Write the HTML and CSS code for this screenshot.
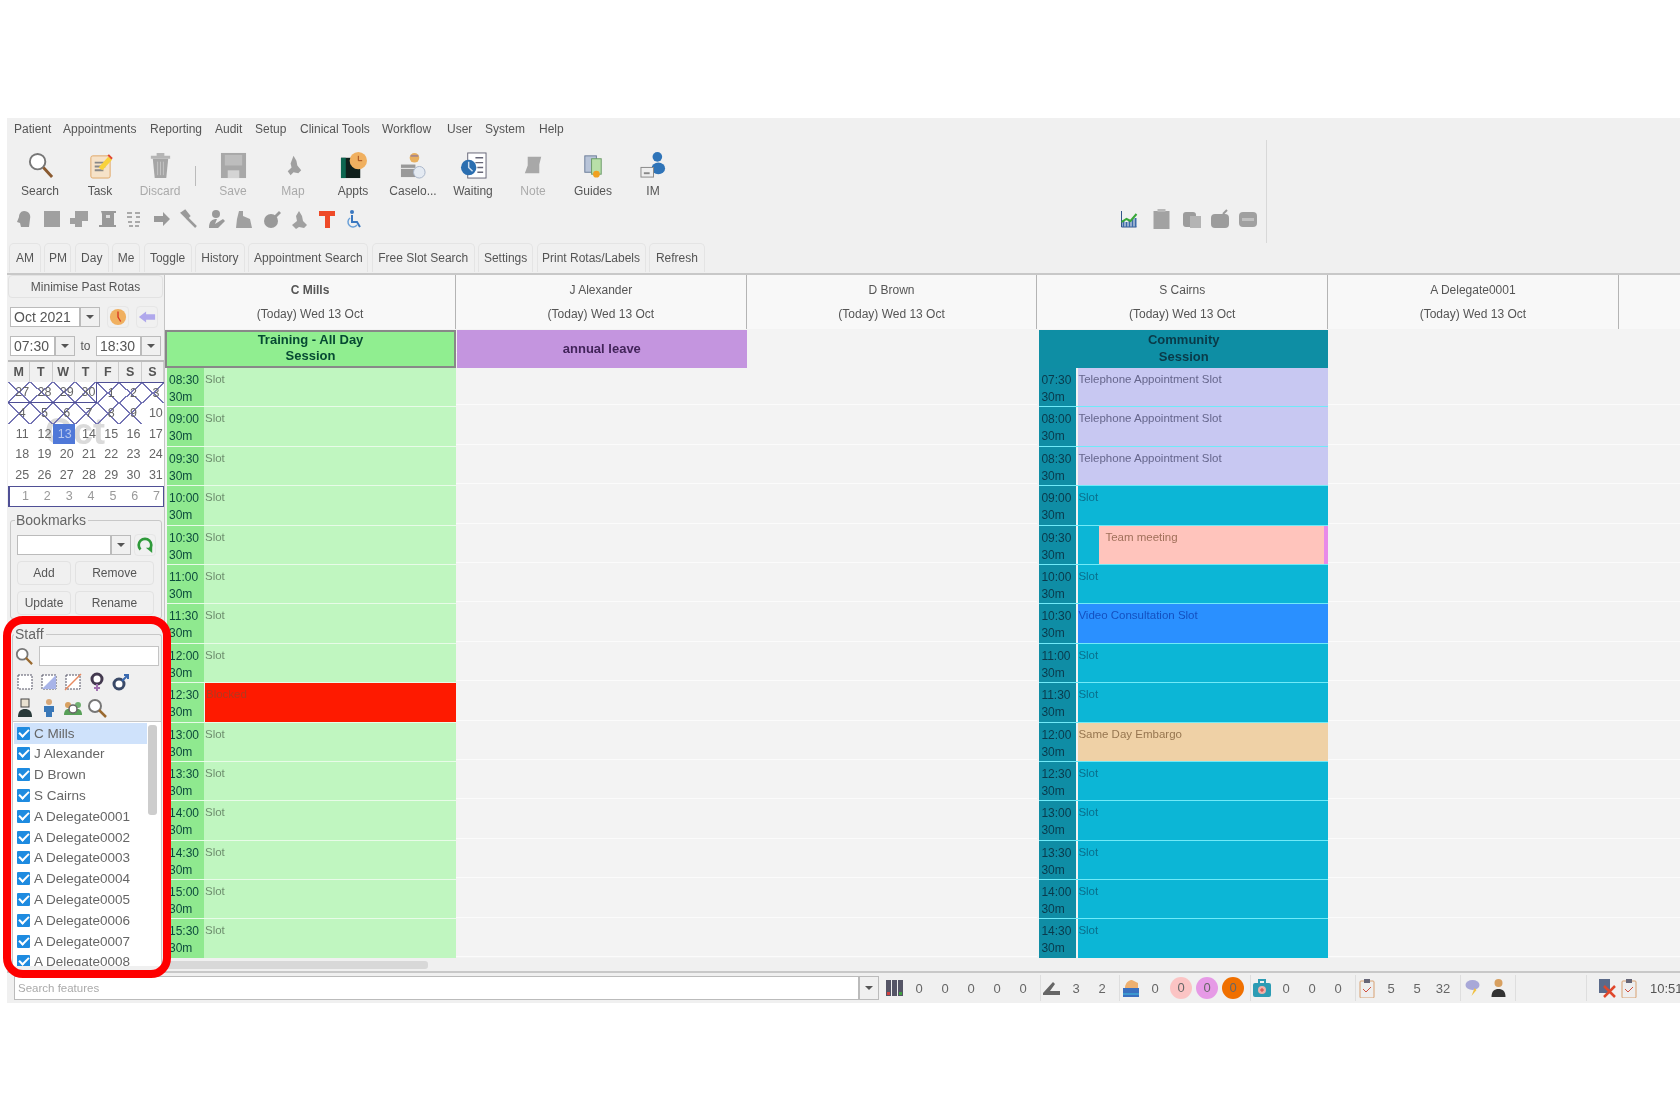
FILE: index.html
```html
<!DOCTYPE html>
<html lang="en">
<head>
  <meta charset="UTF-8" />
  <title>Rota view</title>
  <link rel="stylesheet" href="styles.css">
</head>
<body>

<div class="app">

  <!-- Menu -->
  <div class="menu">
    <span style="width:49px">Patient</span><span style="width:87px">Appointments</span><span style="width:65px">Reporting</span><span style="width:40px">Audit</span><span style="width:45px">Setup</span><span style="width:82px">Clinical Tools</span><span style="width:65px">Workflow</span><span style="width:38px">User</span><span style="width:54px">System</span><span>Help</span>
  </div>

  <!-- Toolbars -->
  <div class="tools">
    <div class="big">
      <div class="tool"><svg viewBox="0 0 28 28"><circle cx="11" cy="10" r="8" fill="#fff" stroke="#777" stroke-width="2"/><path d="M17 16l9 10" stroke="#8a5a30" stroke-width="3"/></svg><span>Search</span></div>
      <div class="tool"><svg viewBox="0 0 28 28"><rect x="4" y="4" width="20" height="23" rx="2" fill="#f6e2c8" stroke="#e0a868"/><path d="M8 11h11M8 15h11M8 19h9" stroke="#888" stroke-width="2"/><path d="M12 16l10-11 4 3-10 11z" fill="#f8d23c"/><path d="M22 3l4 4" stroke="#e04830" stroke-width="2"/></svg><span>Task</span></div>
      <div class="tool off"><svg viewBox="0 0 28 28"><path d="M6 7h16l-2 20H8z" fill="#a5a5a5"/><path d="M4 4h20v3H4zM10 1h8v3h-8z" fill="#b5b5b5"/><path d="M11 10v14M14 10v14M17 10v14" stroke="#c4c4c4"/></svg><span>Discard</span></div>
      <div class="sep"></div>
      <div class="tool off"><svg viewBox="0 0 28 28"><path d="M1 1h26v26H1z" fill="#a8a8a8"/><path d="M5 3h18v11H5z" fill="#bdbdbd"/><path d="M8 19h12v8H8z" fill="#d4d4d4"/></svg><span>Save</span></div>
      <div class="tool off"><svg viewBox="0 0 28 28"><path d="M14 4l3 5 1 5 4 5-3 3-5-1-3 3-3-4 4-4-1-4z" fill="#a0a0a0"/></svg><span>Map</span></div>
      <div class="tool"><svg viewBox="0 0 28 28"><path d="M1 6h20v21H1z" fill="#10201c"/><path d="M1 6h5v21H1z" fill="#0d6650"/><circle cx="19" cy="9" r="9" fill="#f0b060"/><path d="M19 4v5h4" stroke="#a04818" fill="none"/></svg><span>Appts</span></div>
      <div class="tool"><svg viewBox="0 0 28 28"><rect x="1" y="13" width="15" height="13" fill="#999"/><path d="M1 17h15" stroke="#eee"/><circle cx="20" cy="21" r="6" fill="#e4eaf2" stroke="#a8b4c8"/><circle cx="15" cy="6" r="5" fill="#e8b060"/><path d="M11 4h8" stroke="#a88" stroke-width="2"/></svg><span>Caselo...</span></div>
      <div class="tool"><svg viewBox="0 0 28 28"><rect x="8" y="1" width="19" height="26" fill="#fff" stroke="#667"/><path d="M16 6h8M16 11h8M18 16h6M18 21h6" stroke="#667" stroke-width="1.5"/><circle cx="9" cy="16" r="8" fill="#2a6eb0"/><path d="M9 10v6l4 4" stroke="#cde" fill="none" stroke-width="1.5"/></svg><span>Waiting</span></div>
      <div class="tool off"><svg viewBox="0 0 28 28"><path d="M8 5h14l-2 8v9H5l3-8z" fill="#a8a8a8"/></svg><span>Note</span></div>
      <div class="tool"><svg viewBox="0 0 28 28"><rect x="5" y="4" width="12" height="17" fill="#b8c4d8" stroke="#6a7c98"/><rect x="12" y="7" width="10" height="16" fill="#b8e0a8" stroke="#6a9a68"/><circle cx="17" cy="23" r="3.5" fill="#f0a020"/></svg><span>Guides</span></div>
      <div class="tool"><svg viewBox="0 0 28 28"><circle cx="18" cy="5" r="5" fill="#2f74b8"/><ellipse cx="19" cy="17" rx="7" ry="6" fill="#2f74b8"/><rect x="1" y="16" width="13" height="10" fill="#eee" stroke="#888"/><path d="M4 22h6" stroke="#888" stroke-width="2"/></svg><span>IM</span></div>
    </div>
    <div class="small">
      <svg viewBox="0 0 20 20"><path d="M10 2c5 0 7 4 6 8l-1 8H7l-1-4-3-1 2-5c0-3 2-6 5-6z" fill="#9a9a9a"/></svg>
      <svg viewBox="0 0 20 20"><path d="M2 2h16v16H2z" fill="#a0a0a0"/></svg>
      <svg viewBox="0 0 20 20"><path d="M6 2h13v10h-6v6H6v-3H1V9h5z" fill="#a0a0a0"/></svg>
      <svg viewBox="0 0 20 20"><path d="M4 2h15v2h-2v12h2v2H2v-2h3V5z" fill="#999"/><path d="M9 6h4v3H9z" fill="#ddd"/></svg>
      <svg viewBox="0 0 20 20"><path d="M3 4h5M11 4h5M3 8h5M12 8h4M4 13h4M11 13h5M5 17h4M11 17h4" stroke="#aaa" stroke-width="2"/></svg>
      <svg viewBox="0 0 20 20"><path d="M2 7h9V3l7 7-7 7v-4H2z" fill="#999"/></svg>
      <svg viewBox="0 0 20 20"><path d="M3 4l3-2 4 5-2 2zM8 9l9 9" stroke="#9a9a9a" stroke-width="2.5" fill="#9a9a9a"/></svg>
      <svg viewBox="0 0 20 20"><circle cx="9" cy="5" r="4" fill="#999"/><path d="M2 19c0-7 3-9 8-9l-2 5 8-5 2 2-7 7z" fill="#999"/></svg>
      <svg viewBox="0 0 20 20"><path d="M5 2h4v5l7 3 2 9H2l1-9z" fill="#a0a0a0"/></svg>
      <svg viewBox="0 0 20 20"><circle cx="9" cy="12" r="7" fill="#999"/><path d="M12 7l5-5 2 2-5 5z" fill="#999"/></svg>
      <svg viewBox="0 0 20 20"><path d="M10 2l3 5 1 5 4 4-3 3-5-1-3 2-4-4 5-4-1-5z" fill="#a0a0a0"/></svg>
      <svg viewBox="0 0 20 20"><path d="M2 2h16v5h-5v12H8V7H2z" fill="#ee4a28"/></svg>
      <svg viewBox="0 0 20 20"><circle cx="8" cy="3" r="2" fill="#3a78c0"/><path d="M8 6v7h5l3 5" stroke="#3a78c0" stroke-width="2" fill="none"/><path d="M6 9a5 5 0 1 0 7 7" stroke="#6aa0d8" stroke-width="1.5" fill="none"/></svg>
      <div class="small-right">
        <svg class="w33" viewBox="0 0 20 20"><path d="M3 2v16h15" stroke="#33558a" fill="none"/><path d="M5 18v-7M8 18v-5M11 18v-6M14 18v-8M17 18v-9" stroke="#3b6aa8" stroke-width="2"/><path d="M3 13l5-3 4 2 6-7" stroke="#38a838" stroke-width="2" fill="none"/></svg>
        <svg class="w33" viewBox="0 0 20 20"><path d="M2 2h16v18H2z" fill="#a2a2a2"/><path d="M6 0h8v3H6z" fill="#b8b8b8"/></svg>
        <svg viewBox="0 0 20 20"><rect x="1" y="3" width="13" height="15" rx="3" fill="#9c9c9c"/><rect x="8" y="7" width="11" height="12" fill="#b4b4b4"/></svg>
        <svg viewBox="0 0 20 20"><rect x="1" y="5" width="18" height="14" rx="4" fill="#9c9c9c"/><path d="M13 5l4-4" stroke="#999" stroke-width="2"/></svg>
        <svg viewBox="0 0 20 20"><rect x="1" y="3" width="18" height="15" rx="4" fill="#a0a0a0"/><path d="M4 9h12v3H4z" fill="#c0c0c0"/></svg>
      </div>
    </div>
  </div>

  <!-- Tabs -->
  <div class="tabs">
    <button style="width:32px">AM</button><button style="width:27px">PM</button><button style="width:34px">Day</button><button style="width:28px">Me</button><button style="width:48px">Toggle</button><button style="width:50px">History</button><button style="width:120px">Appointment Search</button><button style="width:103px">Free Slot Search</button><button style="width:55px">Settings</button><button style="width:109px">Print Rotas/Labels</button><button style="width:56px">Refresh</button>
  </div>

  <div class="main">

    <!-- Left panel -->
    <div class="side">
      <button class="minimise">Minimise Past Rotas</button>

      <div class="date-row">
        <div class="combo month"><span>Oct 2021</span><i></i></div>
        <div class="sq"><svg viewBox="0 0 20 20"><circle cx="10" cy="10" r="9" fill="#f0b060"/><path d="M10 4v6l3 5" stroke="#d83820" fill="none" stroke-width="1.5"/></svg></div>
        <div class="sq"><svg viewBox="0 0 20 20"><path d="M1 10l8-6v3h10v6H9v3z" fill="#b0a8ec"/></svg></div>
      </div>

      <div class="time-row">
        <div class="combo hour"><span>07:30</span><i></i></div>
        <span class="to">to</span>
        <div class="combo hour"><span>18:30</span><i></i></div>
      </div>

      <div class="cal">
        <div class="cal-head"><b>M</b><b>T</b><b>W</b><b>T</b><b>F</b><b>S</b><b>S</b></div>
        <div class="watermark">Oct</div>
        <div class="cal-days">
          <span class="x mb">27</span><span class="x mb">28</span><span class="x mb">29</span><span class="x mb mr">30</span><span class="x mt">1</span><span class="x mt">2</span><span class="x mt">3</span>
          <span class="x">4</span><span class="x">5</span><span class="x">6</span><span class="x">7</span><span class="x">8</span><span class="x">9</span><span>10</span>
          <span>11</span><span>12</span><span class="today">13</span><span>14</span><span>15</span><span>16</span><span>17</span>
          <span>18</span><span>19</span><span>20</span><span>21</span><span>22</span><span>23</span><span>24</span>
          <span>25</span><span>26</span><span>27</span><span>28</span><span>29</span><span>30</span><span>31</span>
        </div>
        <div class="cal-next"><span>1</span><span>2</span><span>3</span><span>4</span><span>5</span><span>6</span><span>7</span></div>
      </div>

      <fieldset class="bookmarks">
        <legend>Bookmarks</legend>
        <div class="bm-row">
          <div class="combo bm"><span></span><i></i></div>
          <div class="sq bm-go"><svg viewBox="0 0 20 20"><path d="M5 15a7 7 0 1 1 10 0" stroke="#2f9a3a" stroke-width="3" fill="none"/><path d="M11 13h7v6z" fill="#2f9a3a"/></svg></div>
        </div>
        <div class="bm-btns">
          <button>Add</button><button>Remove</button><button>Update</button><button>Rename</button>
        </div>
      </fieldset>

      <fieldset class="staff">
        <legend>Staff</legend>
        <div class="staff-search">
          <svg viewBox="0 0 20 20"><circle cx="8" cy="8" r="6" fill="#fff" stroke="#777" stroke-width="2"/><path d="M12 12l7 7" stroke="#9a6a30" stroke-width="2.5"/></svg>
          <div class="staff-input"></div>
        </div>
        <div class="staff-icons">
          <svg viewBox="0 0 20 20"><rect x="3" y="3" width="14" height="14" fill="#fff" stroke="#556" stroke-dasharray="2 1"/></svg>
          <svg viewBox="0 0 20 20"><rect x="3" y="3" width="14" height="14" fill="#fff" stroke="#556" stroke-dasharray="2 1"/><path d="M17 3v14H3z" fill="#a8b4e8"/></svg>
          <svg viewBox="0 0 20 20"><rect x="3" y="3" width="14" height="14" fill="#fff" stroke="#556" stroke-dasharray="2 1"/><path d="M2 18L18 2" stroke="#e88a60" stroke-width="1.5"/></svg>
          <svg viewBox="0 0 20 20"><circle cx="10" cy="7" r="5" fill="#fff" stroke="#443a50" stroke-width="3"/><path d="M10 12v7M7 16h6" stroke="#a070b0" stroke-width="2"/></svg>
          <svg viewBox="0 0 20 20"><circle cx="8" cy="12" r="5" fill="#fff" stroke="#3a4a68" stroke-width="3"/><path d="M11 9l6-6M13 3h4v4" stroke="#3a6ab0" stroke-width="2" fill="none"/></svg>
        </div>
        <div class="staff-icons">
          <svg viewBox="0 0 20 20"><rect x="6" y="1" width="8" height="8" fill="#e8e0d0" stroke="#444"/><path d="M3 19c0-6 3-8 7-8s7 2 7 8z" fill="#2a3a3a"/></svg>
          <svg viewBox="0 0 20 20"><circle cx="10" cy="4" r="3" fill="#d8a878"/><path d="M5 8h10v6h-2v5H7v-5H5z" fill="#3a78b8"/></svg>
          <svg viewBox="0 0 20 20"><circle cx="5" cy="7" r="3" fill="#d8a060"/><circle cx="15" cy="7" r="3" fill="#70b070"/><path d="M1 17c0-4 2-6 4-6h10c2 0 4 2 4 6z" fill="#58a058"/><circle cx="10" cy="11" r="4" fill="#fff" stroke="#666" stroke-width="1.5"/></svg>
          <svg viewBox="0 0 20 20"><circle cx="8" cy="8" r="6" fill="#fff" stroke="#777" stroke-width="2"/><path d="M12 12l7 7" stroke="#9a6a30" stroke-width="2.5"/></svg>
        </div>
        <div class="staff-list">
          <div class="sb"></div>
          <label class="sel"><i></i>C Mills</label>
          <label><i></i>J Alexander</label>
          <label><i></i>D Brown</label>
          <label><i></i>S Cairns</label>
          <label><i></i>A Delegate0001</label>
          <label><i></i>A Delegate0002</label>
          <label><i></i>A Delegate0003</label>
          <label><i></i>A Delegate0004</label>
          <label><i></i>A Delegate0005</label>
          <label><i></i>A Delegate0006</label>
          <label><i></i>A Delegate0007</label>
          <label><i></i>A Delegate0008</label>
        </div>
      </fieldset>
    </div>

    <!-- Rota columns -->
    <div class="rota">
      <div class="cols">
        <div class="col green">
          <div class="col-head"><strong>C Mills</strong><span>(Today) Wed 13 Oct</span></div>
          <div class="session training">Training - All Day<br>Session</div>
          <div class="slot"><div class="time">08:30<br>30m</div><div class="lab">Slot</div></div>
          <div class="slot"><div class="time">09:00<br>30m</div><div class="lab">Slot</div></div>
          <div class="slot"><div class="time">09:30<br>30m</div><div class="lab">Slot</div></div>
          <div class="slot"><div class="time">10:00<br>30m</div><div class="lab">Slot</div></div>
          <div class="slot"><div class="time">10:30<br>30m</div><div class="lab">Slot</div></div>
          <div class="slot"><div class="time">11:00<br>30m</div><div class="lab">Slot</div></div>
          <div class="slot"><div class="time">11:30<br>30m</div><div class="lab">Slot</div></div>
          <div class="slot"><div class="time">12:00<br>30m</div><div class="lab">Slot</div></div>
          <div class="slot"><div class="time">12:30<br>30m</div><div class="lab blocked">Blocked</div></div>
          <div class="slot"><div class="time">13:00<br>30m</div><div class="lab">Slot</div></div>
          <div class="slot"><div class="time">13:30<br>30m</div><div class="lab">Slot</div></div>
          <div class="slot"><div class="time">14:00<br>30m</div><div class="lab">Slot</div></div>
          <div class="slot"><div class="time">14:30<br>30m</div><div class="lab">Slot</div></div>
          <div class="slot"><div class="time">15:00<br>30m</div><div class="lab">Slot</div></div>
          <div class="slot"><div class="time">15:30<br>30m</div><div class="lab">Slot</div></div>
        </div>

        <div class="col empty">
          <div class="col-head"><span>J Alexander</span><span>(Today) Wed 13 Oct</span></div>
          <div class="session leave">annual leave</div>
        </div>

        <div class="col empty">
          <div class="col-head"><span>D Brown</span><span>(Today) Wed 13 Oct</span></div>
          <div class="session"></div>
        </div>

        <div class="col teal">
          <div class="col-head"><span>S Cairns</span><span>(Today) Wed 13 Oct</span></div>
          <div class="session community">Community<br>Session</div>
          <div class="slot"><div class="time">07:30<br>30m</div><div class="lab phone">Telephone Appointment Slot</div></div>
          <div class="slot"><div class="time">08:00<br>30m</div><div class="lab phone">Telephone Appointment Slot</div></div>
          <div class="slot"><div class="time">08:30<br>30m</div><div class="lab phone">Telephone Appointment Slot</div></div>
          <div class="slot"><div class="time">09:00<br>30m</div><div class="lab">Slot</div></div>
          <div class="slot"><div class="time">09:30<br>30m</div><div class="lab meeting"><div class="meet">Team meeting</div></div></div>
          <div class="slot"><div class="time">10:00<br>30m</div><div class="lab">Slot</div></div>
          <div class="slot"><div class="time">10:30<br>30m</div><div class="lab video">Video Consultation Slot</div></div>
          <div class="slot"><div class="time">11:00<br>30m</div><div class="lab">Slot</div></div>
          <div class="slot"><div class="time">11:30<br>30m</div><div class="lab">Slot</div></div>
          <div class="slot"><div class="time">12:00<br>30m</div><div class="lab embargo">Same Day Embargo</div></div>
          <div class="slot"><div class="time">12:30<br>30m</div><div class="lab">Slot</div></div>
          <div class="slot"><div class="time">13:00<br>30m</div><div class="lab">Slot</div></div>
          <div class="slot"><div class="time">13:30<br>30m</div><div class="lab">Slot</div></div>
          <div class="slot"><div class="time">14:00<br>30m</div><div class="lab">Slot</div></div>
          <div class="slot"><div class="time">14:30<br>30m</div><div class="lab">Slot</div></div>
        </div>

        <div class="col empty">
          <div class="col-head"><span>A Delegate0001</span><span>(Today) Wed 13 Oct</span></div>
          <div class="session"></div>
        </div>

        <div class="col empty">
          <div class="col-head"></div>
          <div class="session"></div>
        </div>
      </div>
      <div class="hscroll"><div class="thumb"></div></div>
    </div>
  </div>

  <!-- Status bar -->
  <div class="status">
    <div class="combo features"><span>Search features</span><i></i></div>
    <div class="st">
      <svg viewBox="0 0 20 20"><path d="M1 2h5v16H1zM7 2h5v16H7zM13 2h5v16h-5z" fill="#556"/><path d="M2 14h3v3H2z" fill="#d04040"/><path d="M14 14h3v3h-3z" fill="#40a040"/></svg>
      <span>0</span><span>0</span><span>0</span><span>0</span><span>0</span>
    </div>
    <div class="st">
      <svg viewBox="0 0 20 20"><path d="M1 15l10-11 2 2-5 7h10v4H1z" fill="#666"/></svg>
      <span>3</span><span>2</span>
    </div>
    <div class="st">
      <svg viewBox="0 0 20 20"><path d="M2 10h16v9H2z" fill="#3a70c0"/><path d="M4 9c1-5 4-7 7-7l6 3v5H4z" fill="#eeb070"/><path d="M2 16h16" stroke="#40c0e0"/></svg>
      <span>0</span><span class="dot pink">0</span><span class="dot mauve">0</span><span class="dot orange">0</span>
    </div>
    <div class="st">
      <svg viewBox="0 0 20 20"><rect x="1" y="5" width="18" height="14" rx="2" fill="#2c9cb4"/><path d="M7 5V2h6v3" stroke="#2c9cb4" fill="none" stroke-width="2"/><circle cx="10" cy="12" r="4" fill="#f0b0a8"/><path d="M8 12h4M10 10v4" stroke="#d04040"/></svg>
      <span>0</span><span>0</span><span>0</span>
    </div>
    <div class="st">
      <svg viewBox="0 0 20 20"><rect x="3" y="3" width="14" height="17" rx="1" fill="#eee" stroke="#d8a070"/><rect x="7" y="1" width="6" height="4" fill="#667"/><path d="M6 11l3 3 5-5" stroke="#d05040" fill="none"/></svg>
      <span>5</span><span>5</span><span>32</span>
    </div>
    <div class="st st-pair">
      <svg viewBox="0 0 20 20"><ellipse cx="9" cy="7" rx="7" ry="5" fill="#a8a8d8"/><path d="M11 10l-3 8 5-6z" fill="#f0c040"/></svg>
      <svg viewBox="0 0 20 20"><circle cx="10" cy="5" r="4" fill="#d8a060"/><path d="M3 19c0-6 3-8 7-8s7 2 7 8z" fill="#333"/></svg>
    </div>
    <div class="st st-blank"></div>
    <div class="st st-end">
      <svg viewBox="0 0 20 20"><rect x="2" y="1" width="11" height="14" fill="#5a6a8a"/><path d="M7 8l11 11M18 8L7 19" stroke="#e0482c" stroke-width="2.5"/></svg>
      <svg viewBox="0 0 20 20"><rect x="3" y="3" width="14" height="17" rx="1" fill="#eee" stroke="#d8a070"/><rect x="7" y="1" width="6" height="4" fill="#667"/><path d="M6 11l3 3 5-5" stroke="#d05040" fill="none"/></svg>
      <em>10:51</em>
    </div>
  </div>
</div>

<!-- Highlight drawn over the staff panel -->
<div class="marker"></div>

</body>
</html>
```

FILE: styles.css
```css
html, body {
  margin: 0;
  height: 1120px;
  overflow: hidden;
  background: #fff;
}
body {
  padding: 118px 0 0 7px;
  box-sizing: border-box;
  position: relative;
  font-family: "Liberation Sans", Arial, sans-serif;
  font-size: 12px;
  color: #555;
}
button {
  font: inherit;
  color: inherit;
  background: #f0f0f0;
  border: 1px solid #e2e2e2;
  border-radius: 4px;
  padding: 0;
}
svg {
  display: block;
  flex: none;
}

.app {
  width: 1673px;
  height: 885px;
  overflow: hidden;
  background: #f0f0f0;
  filter: blur(0.45px);
}

/* menu + toolbars */
.menu {
  height: 22px;
  line-height: 22px;
  padding-left: 7px;
  display: flex;
  white-space: nowrap;
}
.tools {
  width: 1259px;
  padding-top: 12px;
  height: 91px;
  border-right: 1px solid #d8d8d8;
  box-sizing: content-box;
}
.big {
  display: flex;
  padding-left: 3px;
  height: 47px;
}
.tool {
  width: 60px;
  flex: none;
  display: flex;
  flex-direction: column;
  align-items: center;
}
.tool svg {
  width: 27px;
  height: 27px;
}
.tool span {
  margin-top: 5px;
  line-height: 14px;
}
.tool.off {
  color: #aaa;
}
.sep {
  width: 1px;
  height: 20px;
  margin: 14px 13px 0 -1px;
  background: #bbb;
  flex: none;
  position: relative;
  left: 6px;
}
.small {
  display: flex;
  align-items: center;
  height: 30px;
  margin-top: 5px;
  padding-left: 7px;
  gap: 7.5px;
}
.small svg {
  width: 20px;
  height: 20px;
}
.small-right {
  margin-left: auto;
  display: flex;
  padding-right: 4px;
}
.small-right svg {
  width: 20px;
  height: 20px;
  padding: 0 4px;
}
.small-right svg.w33 {
  padding: 0 6.5px;
}
.tabs {
  display: flex;
  gap: 3.4px;
  height: 29px;
  padding-left: 2px;
}
.tabs button {
  flex: none;
  height: 29px;
  border-bottom: none;
  border-radius: 5px 5px 0 0;
  border-color: #e4e4e4;
}

/* main area */
.main {
  display: flex;
  height: 698px;
  border-top: 2px solid #c8c8c8;
  box-sizing: border-box;
  margin-top: 1px;
}
.side {
  width: 158px;
  flex: none;
  border-right: 1px solid #c4c4c4;
  box-sizing: border-box;
  overflow: hidden;
}
.minimise {
  display: block;
  width: 155px;
  height: 23px;
  margin: 0 0 0 1px;
}

.combo {
  display: flex;
  height: 20px;
  background: #fff;
  border: 1px solid #bbb;
  box-sizing: border-box;
  font-size: 14px;
  line-height: 18px;
  flex: none;
}
.combo span {
  flex: 1;
  padding-left: 3px;
  white-space: nowrap;
}
.combo i {
  width: 18px;
  flex: none;
  border-left: 2px solid #bbb;
  background: #f0f0f0;
  position: relative;
}
.combo i::after {
  content: "";
  position: absolute;
  left: 5px;
  top: 7px;
  border: 4px solid transparent;
  border-top: 4px solid #555;
  border-bottom: 0;
}
.sq {
  width: 22px;
  height: 22px;
  padding: 1px;
  box-sizing: border-box;
  background: #f0f0f0;
  border: 1px solid #e6e6e6;
  border-radius: 4px;
  flex: none;
}
.date-row {
  display: flex;
  align-items: center;
  gap: 7px;
  margin: 9px 0 0 3px;
  height: 20px;
}
.month {
  width: 90px;
}
.time-row {
  display: flex;
  align-items: center;
  margin: 9px 0 0 3px;
  height: 20px;
}
.hour {
  width: 65px;
}
.to {
  width: 21px;
  text-align: center;
}

/* month calendar */
.cal {
  position: relative;
  margin-top: 4px;
  margin-left: 1px;
  width: 156px;
  background: #fff;
  border-top: 2px solid #bbb;
  font-size: 12.5px;
}
.cal-head {
  display: grid;
  grid-template-columns: repeat(7, 1fr);
  height: 20px;
  background: #f0f0f0;
  text-align: center;
  line-height: 20px;
}
.cal-head b {
  border-right: 1px solid #ccc;
}
.watermark {
  position: absolute;
  left: 37px;
  top: 50px;
  font-size: 36px;
  font-weight: bold;
  color: #dadada;
  line-height: 40px;
}
.cal-days,
.cal-next {
  position: relative;
  display: grid;
  grid-template-columns: repeat(7, 1fr);
  grid-auto-rows: 20.8px;
  line-height: 20.8px;
  text-align: center;
  font-size: 12.5px;
  color: #666;
  text-indent: 6px;
}
.cal-next {
  height: 20.8px;
  box-sizing: border-box;
  line-height: 18px;
  border: 1px solid #4f4f95;
  border-left-width: 2px;
  color: #999;
  text-indent: 9px;
}
.x {
  background:
    linear-gradient(to top right, transparent calc(50% - .7px), #7474b4 calc(50% - .7px), #7474b4 calc(50% + .7px), transparent calc(50% + .7px)),
    linear-gradient(to bottom right, transparent calc(50% - .7px), #7474b4 calc(50% - .7px), #7474b4 calc(50% + .7px), transparent calc(50% + .7px));
}
.mb {
  border-bottom: 1px solid #4f4f95;
}
.mr {
  border-right: 1px solid #4f4f95;
}
.mt {
  border-top: 1px solid #4f4f95;
}
.today {
  background: #4f78d8;
  color: #b8c8ee;
  text-indent: 2px;
}

/* bookmarks + staff */
fieldset {
  margin: 0;
  min-width: 0;
  border: 1px solid #c8c8c8;
  border-radius: 3px;
}
legend {
  padding: 0 2px 0 1px;
  margin-left: 1px;
  font-size: 14px;
  line-height: 15px;
  color: #666;
}
.bookmarks {
  width: 152px;
  height: 106px;
  box-sizing: border-box;
  margin: 6px 0 0 3px;
  padding: 7px 7px 0 6px;
}
.bookmarks legend {
  margin-left: -2px;
}
.bm-row {
  display: flex;
  gap: 3px;
}
.bm {
  width: 114px;
}
.bm-go {
  margin-top: -1px;
}
.bm-btns {
  display: grid;
  grid-template-columns: 54px 79px;
  grid-auto-rows: 24px;
  gap: 6px 4px;
  margin-top: 5px;
}
.staff {
  width: 150px;
  height: 342px;
  box-sizing: border-box;
  margin: 8px 0 0 5px;
  padding: 4px 0 0 0;
  border-bottom: none;
}
.staff-search {
  display: flex;
  align-items: center;
  gap: 6px;
  padding-left: 2px;
}
.staff-search svg {
  width: 18px;
  height: 18px;
}
.staff-input {
  width: 120px;
  height: 20px;
  box-sizing: border-box;
  background: #fff;
  border: 1px solid #c4c4c4;
}
.staff-icons {
  display: flex;
  gap: 4px;
  margin: 6px 0 0 2px;
  height: 20px;
}
.staff-icons svg {
  width: 20px;
  height: 20px;
}
.staff-list {
  position: relative;
  background: #fff;
  margin-top: 3px;
  height: 245px;
  overflow: hidden;
  padding-top: 1px;
  border-top: 1px solid #c8c8c8;
  box-sizing: border-box;
  font-size: 13.5px;
}
.staff-list label {
  display: flex;
  align-items: center;
  height: 20.8px;
  margin-left: 1px;
  width: 133px;
  color: #666;
  white-space: nowrap;
}
.staff-list label.sel {
  background: #cfe2fb;
}
.staff-list i {
  position: relative;
  width: 13px;
  height: 13px;
  margin: 0 4px 0 3px;
  background: #1e8be0;
  border-radius: 1px;
  flex: none;
}
.staff-list i::after {
  content: "";
  position: absolute;
  left: 2px;
  top: 2px;
  width: 8px;
  height: 4px;
  border-left: 2px solid #fff;
  border-bottom: 2px solid #fff;
  transform: rotate(-45deg);
}
.sb {
  position: absolute;
  right: 4px;
  top: 3px;
  width: 9px;
  height: 90px;
  background: #cdcdcd;
  border-radius: 3px;
}

/* rota */
.rota {
  flex: 1;
  min-width: 0;
  overflow: hidden;
}
.cols {
  display: grid;
  grid-template-columns: 291px repeat(5, 290.7px);
  height: 683px;
  overflow: hidden;
}
.col {
  background: #f3f3f3;
  overflow: hidden;
}
.col.empty {
  background: repeating-linear-gradient(#f3f3f3 0, #f3f3f3 38.4px, #fbfbfb 38.4px, #fbfbfb 39.4px);
  background-position: 0 91px;
}
.col-head {
  height: 54px;
  background: #f8f8f8;
  border-right: 1px solid #b4b4b4;
  box-sizing: border-box;
  display: flex;
  flex-direction: column;
  align-items: center;
  padding-top: 8px;
  gap: 10px;
  line-height: 14px;
}
.session {
  height: 38px;
  margin-top: 1px;
  box-sizing: border-box;
  text-align: center;
  font-size: 13px;
  font-weight: bold;
  line-height: 17px;
  background: #f3f3f3;
}
.training {
  background: #90ee90;
  border: 2px solid #888;
  color: #064a32;
  line-height: 16px;
}
.leave {
  background: #c495df;
  margin-left: 1px;
  line-height: 38px;
  color: #42245a;
}
.community {
  background: #0e8ea4;
  margin-left: 2px;
  color: #0a3a48;
  padding-top: 1px;
}
.slot {
  display: flex;
  height: 39.4px;
  box-sizing: border-box;
  border-bottom: 1px solid #e8fbe8;
}
.time {
  width: 37px;
  flex: none;
  padding: 4px 0 0 2px;
  box-sizing: border-box;
  line-height: 17px;
  color: #0b4a3c;
  overflow: hidden;
  white-space: nowrap;
}
.lab {
  flex: 1;
  padding: 4px 0 0 1px;
  font-size: 11.5px;
  line-height: 14px;
  white-space: nowrap;
}
.green .slot {
  margin-left: 2px;
}
.green .time {
  background: #8fe98f;
}
.green .lab {
  background: #c0f6c0;
  color: #6e8e6e;
}
.green .lab.blocked {
  background: #fe1a00;
  color: #b03a20;
  margin-left: 1px;
}
.teal .slot {
  margin-left: 2px;
  border-bottom-color: #70eaf8;
}
.teal .time {
  background: #0f8da5;
  color: #0a3a4c;
}
.teal .lab {
  margin-left: 2px;
  padding-left: 0;
  background: #0cb6d6;
  color: #0a6f8c;
}
.teal .lab.phone {
  background: #c8c8f2;
  color: #66668c;
}
.teal .lab.video {
  background: #2a90ff;
  color: #1450c0;
}
.teal .lab.embargo {
  background: #efd1a6;
  color: #967650;
}
.teal .lab.meeting {
  padding: 0 0 0 21px;
}
.meet {
  height: 100%;
  background: #ffc4bc;
  border-right: 4px solid #e88ae8;
  padding: 4px 0 0 6px;
  box-sizing: border-box;
  color: #a0705a;
}
.hscroll {
  height: 13px;
  padding-top: 3px;
  box-sizing: border-box;
  background: #f0f0f0;
}
.thumb {
  width: 263px;
  height: 8px;
  background: #d8d8d8;
  border-radius: 3px;
}

/* status bar */
.status {
  display: flex;
  align-items: center;
  height: 32px;
  border-top: 2px solid #c8c8c8;
  box-sizing: border-box;
  white-space: nowrap;
  padding-left: 7px;
  font-size: 13px;
}
.features {
  width: 865px;
  height: 24px;
  margin-right: 5px;
  font-size: 11.5px;
  line-height: 22px;
  color: #aaa;
}
.features i::after {
  top: 9px;
}
.st {
  display: flex;
  align-items: center;
  flex: none;
  height: 26px;
  padding-right: 4px;
  border-right: 1px solid #dedede;
}
.st svg {
  width: 20px;
  height: 20px;
  padding: 0 1px;
}
.st span {
  width: 26px;
  text-align: center;
  color: #666;
}
.st .dot {
  width: 22px;
  height: 22px;
  margin: 0 2px;
  line-height: 22px;
  border-radius: 50%;
}
.pink {
  background: #fbc4c4;
}
.mauve {
  background: #e69ae6;
}
.orange {
  background: #f07000;
}
.st-pair {
  padding-left: 0;
}
.st-pair svg {
  padding: 0 2.5px;
}
.st-blank {
  width: 66px;
}
.st-end {
  border-right: none;
  padding-left: 9px;
}
.st-end em {
  font-style: normal;
  margin-left: 10px;
}

/* red highlight, sits over the staff panel */
.marker {
  position: absolute;
  left: 3px;
  top: 616px;
  width: 168px;
  height: 362px;
  box-sizing: border-box;
  border: 8px solid #fe0000;
  border-radius: 20px;
}
```
